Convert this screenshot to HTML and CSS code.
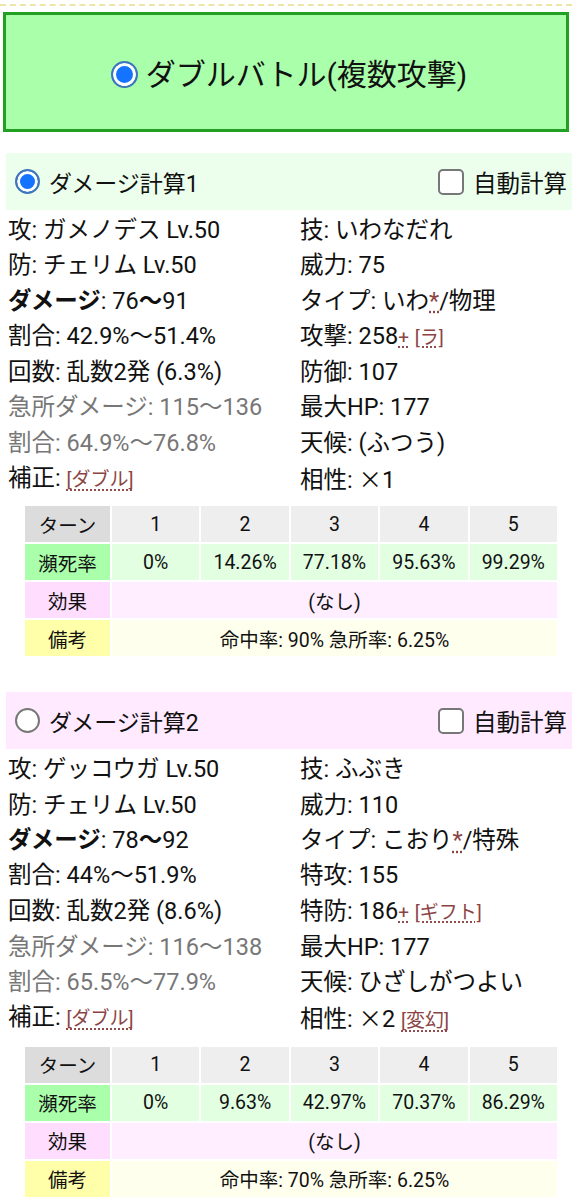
FILE: index.html
```html
<!DOCTYPE html>
<html lang="ja">
<head>
<meta charset="utf-8">
<link rel="stylesheet" href="styles.css">
</head>
<body>
<div class="topline"></div>
<div class="mode"><span class="radio on big"></span><span>ダブルバトル(複数攻撃)</span></div>

<section class="calc">
  <div class="head green"><span class="radio on"></span><span class="title">ダメージ計算1</span><span class="auto"><span class="check"></span>自動計算</span></div>
  <div class="rows">
    <div>攻: ガメノデス Lv.50</div>
    <div>技: いわなだれ</div>
    <div>防: チェリム Lv.50</div>
    <div>威力: 75</div>
    <div><b>ダメージ</b>: 76<b>〜</b>91</div>
    <div>タイプ: いわ<span class="lk">*</span>/物理</div>
    <div>割合: 42.9%〜51.4%</div>
    <div>攻撃: 258<span class="lk sm">+</span> <span class="lk sm">[ラ]</span></div>
    <div>回数: 乱数2発 (6.3%)</div>
    <div>防御: 107</div>
    <div class="gray">急所ダメージ: 115〜136</div>
    <div>最大HP: 177</div>
    <div class="gray">割合: 64.9%〜76.8%</div>
    <div>天候: (ふつう)</div>
    <div>補正: <span class="lk sm">[ダブル]</span></div>
    <div>相性: <span class="cjk">×</span>1</div>
  </div>
  <table class="turns">
    <tr class="r-turn"><th>ターン</th><td>1</td><td>2</td><td>3</td><td>4</td><td>5</td></tr>
    <tr class="r-ko"><th>瀕死率</th><td>0%</td><td>14.26%</td><td>77.18%</td><td>95.63%</td><td>99.29%</td></tr>
    <tr class="r-eff"><th>効果</th><td colspan="5">(なし)</td></tr>
    <tr class="r-note"><th>備考</th><td colspan="5">命中率: 90% 急所率: 6.25%</td></tr>
  </table>
</section>

<section class="calc second">
  <div class="head pink"><span class="radio"></span><span class="title">ダメージ計算2</span><span class="auto"><span class="check"></span>自動計算</span></div>
  <div class="rows">
    <div>攻: ゲッコウガ Lv.50</div>
    <div>技: ふぶき</div>
    <div>防: チェリム Lv.50</div>
    <div>威力: 110</div>
    <div><b>ダメージ</b>: 78<b>〜</b>92</div>
    <div>タイプ: こおり<span class="lk">*</span>/特殊</div>
    <div>割合: 44%〜51.9%</div>
    <div>特攻: 155</div>
    <div>回数: 乱数2発 (8.6%)</div>
    <div>特防: 186<span class="lk sm">+</span> <span class="lk sm">[ギフト]</span></div>
    <div class="gray">急所ダメージ: 116〜138</div>
    <div>最大HP: 177</div>
    <div class="gray">割合: 65.5%〜77.9%</div>
    <div>天候: ひざしがつよい</div>
    <div>補正: <span class="lk sm">[ダブル]</span></div>
    <div>相性: <span class="cjk">×</span>2 <span class="lk sm">[変幻]</span></div>
  </div>
  <table class="turns">
    <tr class="r-turn"><th>ターン</th><td>1</td><td>2</td><td>3</td><td>4</td><td>5</td></tr>
    <tr class="r-ko"><th>瀕死率</th><td>0%</td><td>9.63%</td><td>42.97%</td><td>70.37%</td><td>86.29%</td></tr>
    <tr class="r-eff"><th>効果</th><td colspan="5">(なし)</td></tr>
    <tr class="r-note"><th>備考</th><td colspan="5">命中率: 70% 急所率: 6.25%</td></tr>
  </table>
</section>
</body>
</html>
```
FILE: styles.css
```css
html, body {
  margin: 0;
  padding: 0;
  background: #fff;
}
body {
  font-family: Roboto, "Noto Sans CJK JP", sans-serif;
  color: #111;
  width: 572px;
}
.topline {
  margin-top: 4px;
  border-top: 2px dashed #ece6a8;
}
.mode {
  margin: 6px 3px 0;
  height: 120px;
  box-sizing: border-box;
  border: 3px solid #22a022;
  background: #aaffaa;
  display: flex;
  align-items: center;
  justify-content: center;
  gap: 8px;
  font-size: 30px;
  padding-left: 6px;
}
.radio {
  display: inline-block;
  width: 25px;
  height: 25px;
  box-sizing: border-box;
  border-radius: 50%;
  border: 2px solid #777;
  background: #fff;
  flex: none;
}
.radio.on {
  border-color: #3f76b8;
  background: #1473ff;
  box-shadow: inset 0 0 0 3px #fff;
}
.radio.big {
  width: 27px;
  height: 27px;
  margin-top: 4px;
}
.cjk {
  font-family: "Noto Sans CJK JP", sans-serif;
}
.calc {
  margin: 21px 0 0 6px;
}
.calc.second {
  margin-top: 34px;
}
.head {
  height: 57px;
  display: flex;
  align-items: center;
  padding: 0 5px 0 9px;
  font-size: 23px;
}
.head.green { background: #ecffec; }
.head.pink { background: #ffeaff; }
.head .title {
  margin-left: 9px;
}
.auto {
  margin-left: auto;
  display: flex;
  align-items: center;
  gap: 9px;
  font-size: 23.5px;
}
.check {
  display: inline-block;
  width: 26px;
  height: 26px;
  box-sizing: border-box;
  border: 2px solid #777;
  border-radius: 5px;
  background: #fff;
}
.rows {
  margin-top: 3px;
  padding-left: 2px;
  display: grid;
  grid-template-columns: 292px 1fr;
  font-size: 23.5px;
  line-height: 35.3px;
  white-space: nowrap;
}
.rows b {
  font-weight: 700;
}
.gray {
  color: #777;
}
.lk {
  color: #8b4444;
  text-decoration: underline dotted #8b4444;
  text-underline-offset: 3px;
}
.lk.sm {
  font-size: 19px;
}
.turns {
  margin: 6px 0 0 17px;
  width: 536px;
  border-collapse: separate;
  border-spacing: 2px;
  table-layout: fixed;
  font-size: 19.5px;
  text-align: center;
}
.turns th, .turns td {
  height: 36px;
  padding: 0;
  font-weight: 400;
  text-align: center;
  color: #111;
}
.turns th {
  width: 85px;
}
.r-turn th { background: #dcdcdc; }
.r-turn td { background: #eeeeee; }
.r-ko th { background: #aaffaa; }
.r-ko td { background: #e2ffe2; }
.r-eff th { background: #ffddff; }
.r-eff td { background: #ffeeff; }
.r-note th { background: #ffffaa; }
.r-note td { background: #ffffee; }
```
